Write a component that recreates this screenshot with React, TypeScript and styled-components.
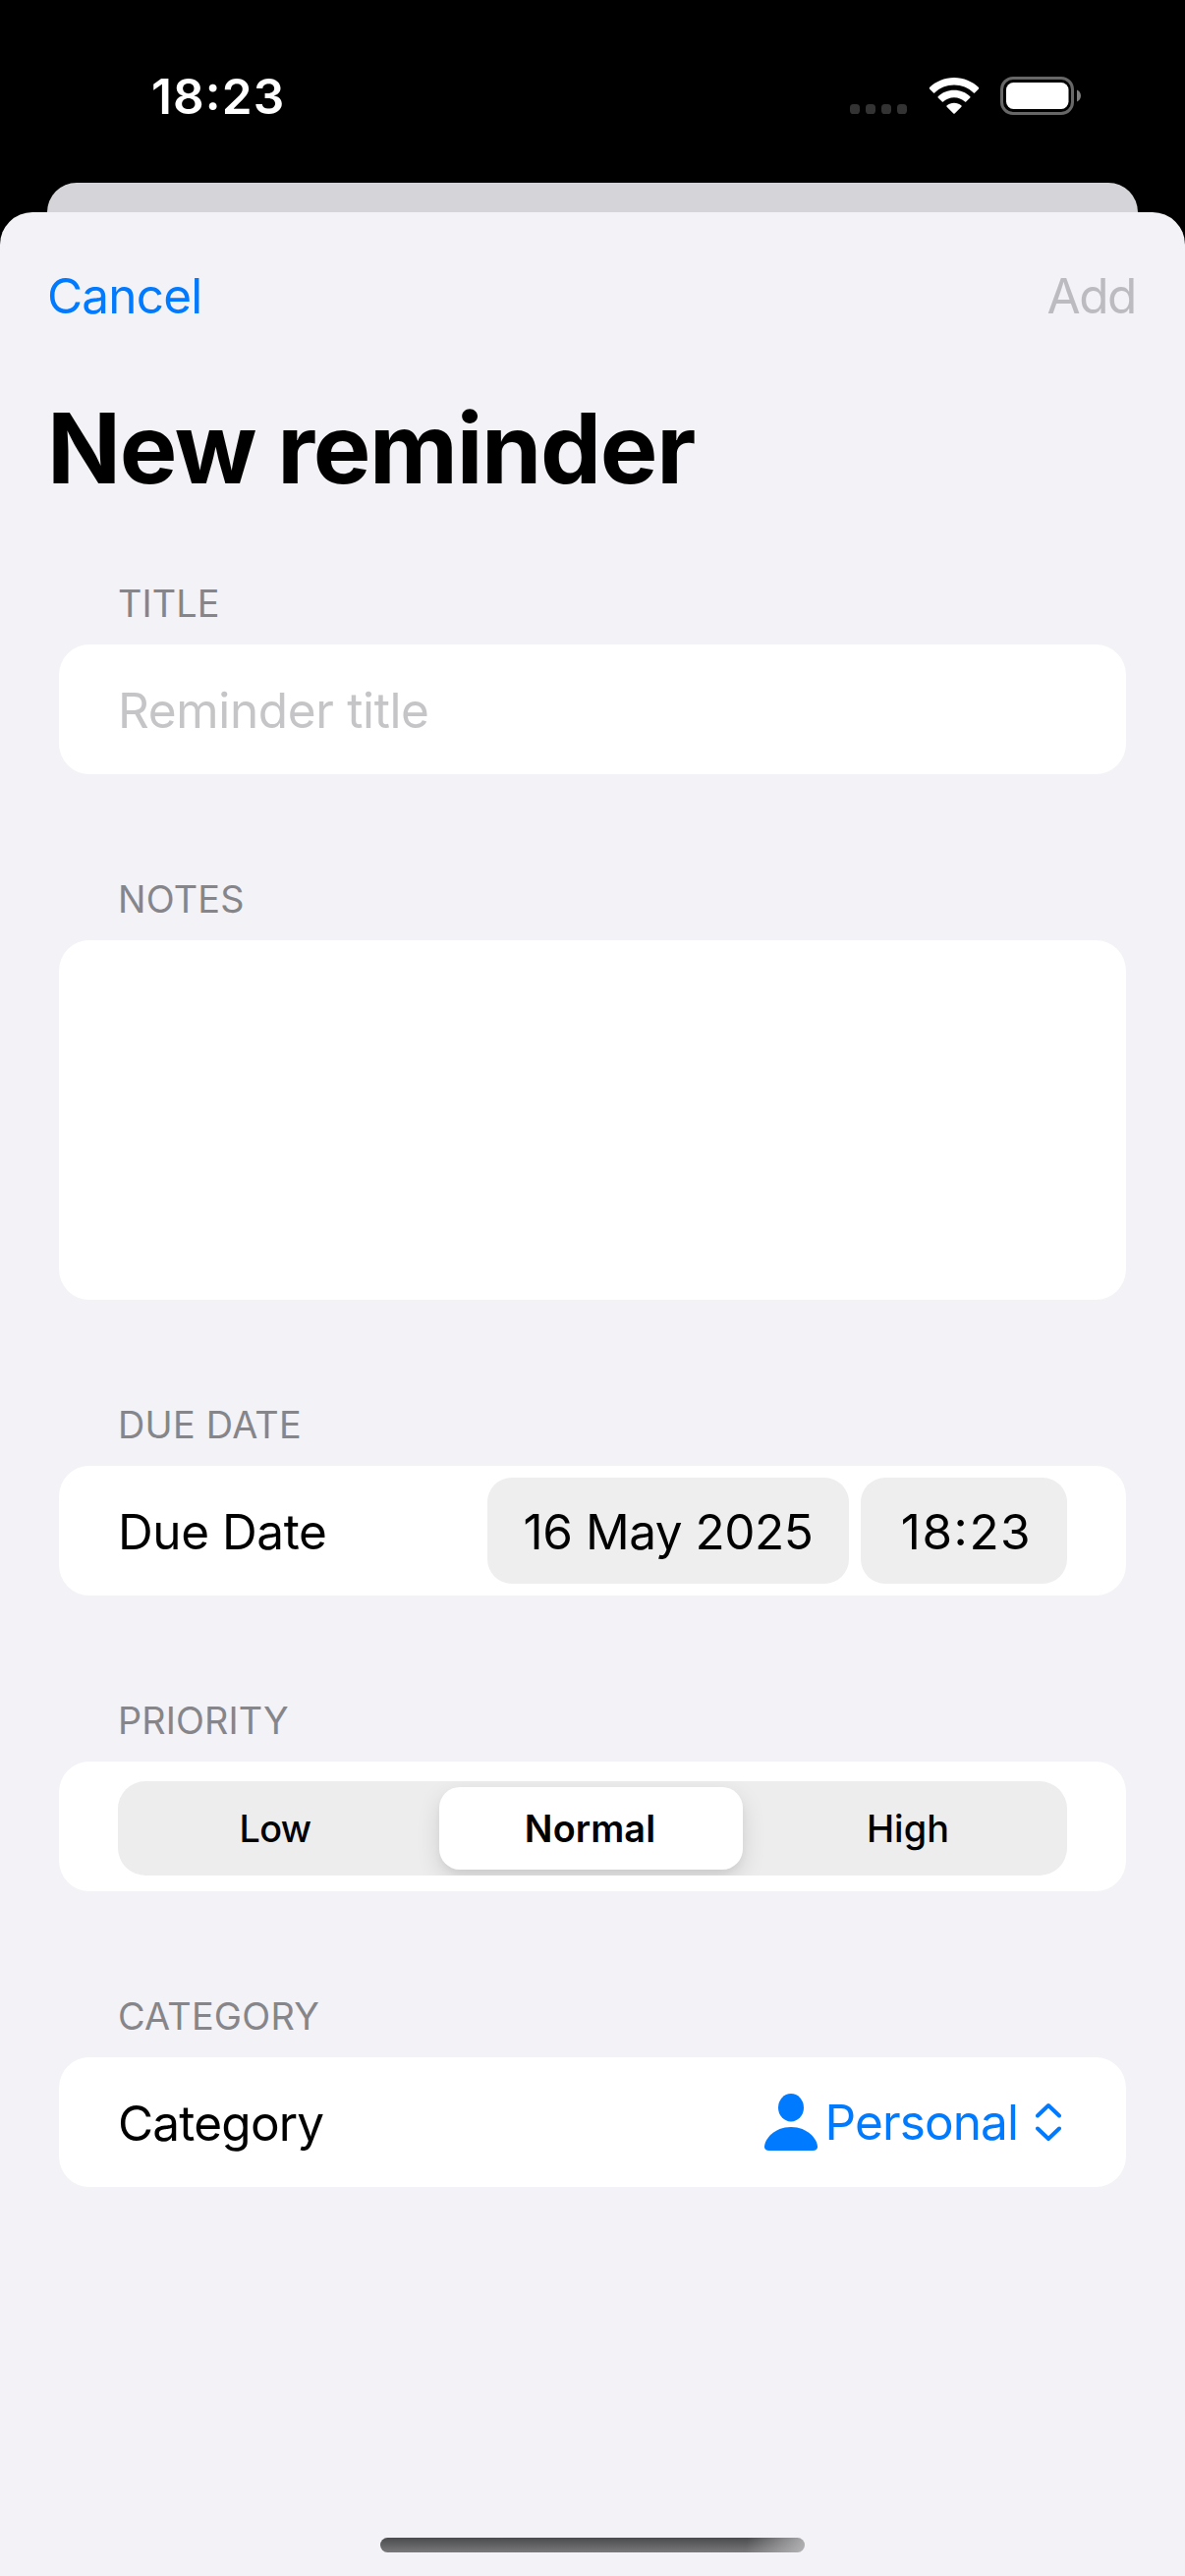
import React from "react";
import styled, { createGlobalStyle } from "styled-components";

const GlobalStyle = createGlobalStyle`
  *, *::before, *::after { box-sizing: border-box; }
  html, body { margin: 0; padding: 0; background: #000; }
  button { border: 0; margin: 0; background: none; font: inherit; color: inherit; }
`;

const Screen = styled.div`
  width: 1206px;
  height: 2622px;
  display: flex;
  flex-direction: column;
  overflow: hidden;
  background: #000;
  color: #000;
  font-family: Inter, "Liberation Sans", sans-serif;
  font-size: 49.5px;
  line-height: 60px;
  white-space: nowrap;
`;

const StatusBar = styled.header`
  height: 186px;
  flex: none;
  display: flex;
  justify-content: space-between;
  align-items: flex-start;
  padding: 68px 106px 0 154px;
`;

const Clock = styled.time`
  color: #fff;
  font-weight: 600;
  letter-spacing: 1.1px;
`;

const Colon = styled.span`
  vertical-align: 4px;
  line-height: 0;
`;

const StatusIcons = styled.div`
  display: flex;
  align-items: flex-start;
  padding-top: 10px;
`;

const BackSheet = styled.div`
  height: 30px;
  flex: none;
  margin: 0 48px;
  border-radius: 32px 32px 0 0;
  background: #d5d4d9;
`;

const Sheet = styled.main`
  flex: 1;
  display: flex;
  flex-direction: column;
  border-radius: 33px 33px 0 0;
  background: #f2f2f7;
`;

const NavBar = styled.nav`
  display: flex;
  justify-content: space-between;
  padding: 55px 50px 0 48px;
`;

const NavButton = styled.button<{ $disabled?: boolean; $tracking: number }>`
  padding: 0;
  color: ${(p) => (p.$disabled ? "#bcbbc0" : "#007aff")};
  letter-spacing: ${(p) => p.$tracking}px;
`;

const Heading = styled.h1`
  margin: 66px 48px 74px;
  font-size: 98.5px;
  line-height: 120px;
  font-weight: 700;
  letter-spacing: -1.3px;
`;

const Form = styled.div`
  display: flex;
  flex-direction: column;
  gap: 104px;
  padding: 0 60px;
`;

const Section = styled.section`
  display: flex;
  flex-direction: column;
`;

const SectionHeader = styled.h2<{ $tracking?: number }>`
  margin: 0;
  padding: 0 60px 19px;
  color: #86858a;
  font-size: 37.8px;
  line-height: 46px;
  font-weight: 400;
  letter-spacing: ${(p) => p.$tracking ?? 0}px;
`;

const Card = styled.div<{ $tall?: boolean }>`
  height: ${(p) => (p.$tall ? 366 : 132)}px;
  display: flex;
  align-items: center;
  justify-content: space-between;
  padding: 0 60px;
  border-radius: 31px;
  background: #fff;
`;

const Label = styled.span<{ $tracking: number; $muted?: boolean }>`
  padding-top: 2px;
  color: ${(p) => (p.$muted ? "#c5c5c7" : "#000")};
  letter-spacing: ${(p) => p.$tracking}px;
`;

const Pickers = styled.div`
  display: flex;
  gap: 12px;
`;

const Pill = styled.button<{ $width: number; $tracking: number; $shift?: number }>`
  width: ${(p) => p.$width}px;
  height: 108px;
  padding: 1px 0 0 ${(p) => p.$shift ?? 0}px;
  border-radius: 25px;
  background: #eee;
  letter-spacing: ${(p) => p.$tracking}px;
`;

const Segmented = styled.div`
  flex: 1;
  height: 96px;
  margin-top: 4px;
  display: grid;
  grid-template-columns: repeat(3, 1fr);
  padding: 6px 0;
  border-radius: 28px;
  background: #ededed;
  overflow: hidden;
  font-size: 37.8px;
`;

const Segment = styled.button<{ $selected?: boolean; $tracking: number }>`
  margin: ${(p) => (p.$selected ? "0 8px 0 5px" : "0")};
  padding: 0 2px 1px 0;
  border-radius: 21px;
  background: ${(p) => (p.$selected ? "#fff" : "transparent")};
  box-shadow: ${(p) => (p.$selected ? "0 9px 24px rgba(0, 0, 0, 0.12), 0 5px 6px rgba(0, 0, 0, 0.04)" : "none")};
  font-weight: ${(p) => (p.$selected ? 580 : 470)};
  letter-spacing: ${(p) => p.$tracking}px;
`;

const Menu = styled.button`
  display: flex;
  align-items: center;
  padding: 0 6px 0 0;
  color: #007aff;
  letter-spacing: -0.9px;
`;

const MenuText = styled.span`
  margin: 0 18px 0 8px;
`;

const HomeIndicator = styled.div`
  width: 432px;
  height: 15px;
  margin: auto auto 24px;
  border-radius: 8px;
  background:
    linear-gradient(100deg, transparent 86%, rgba(190, 190, 192, 0.85) 100%),
    linear-gradient(#4a4b4c, #79797c);
`;

function Time() {
  return <>18<Colon>:</Colon>23</>;
}

function CellDots() {
  return (
    <svg width="58" height="38" viewBox="0 0 58 38" fill="#333">
      {[0, 16, 32, 48].map((x) => (
        <rect key={x} x={x} y="28" width="10" height="10" rx="3.6" />
      ))}
    </svg>
  );
}

const WifiIcon = styled.svg`
  margin-left: 22px;
`;

function Wifi() {
  return (
    <WifiIcon width="52" height="39" viewBox="0 0 52 39" fill="#fff">
      <path d="M26 1C35.800 1 44.600 4.800 51 11.100Q51.500 11.800 51 12.400L47 16.400Q46.400 16.900 45.800 16.400C40.600 11.500 33.700 8.500 26 8.500S11.400 11.500 6.200 16.400Q5.600 16.900 5 16.400L1 12.400Q.5 11.800 1 11.100C7.400 4.800 16.200 1 26 1Z" />
      <path d="M26 13.800C32.300 13.800 38 16.200 42.300 20.200Q42.900 20.900 42.300 21.500L38.200 25.500Q37.600 26.100 37 25.600C34.100 22.900 30.200 21.300 26 21.300S17.900 22.900 15 25.600Q14.400 26.100 13.800 25.500L9.700 21.500Q9.100 20.900 9.700 20.200C14 16.200 19.700 13.800 26 13.800Z" />
      <path d="M26 26.700C28.800 26.700 31.300 27.700 33.300 29.300Q34 30 33.400 30.700L26.700 37.500Q26 38.200 25.300 37.500L18.600 30.700Q18 30 18.700 29.300C20.700 27.700 23.200 26.700 26 26.700Z" />
    </WifiIcon>
  );
}

const BatteryIcon = styled.svg`
  margin-left: 21px;
`;

function Battery() {
  return (
    <BatteryIcon width="82" height="39" viewBox="0 0 82 39">
      <rect x="1.500" y="1.500" width="72" height="36" rx="11.500" fill="none" stroke="#676767" strokeWidth="3" />
      <rect x="6" y="6" width="63.500" height="27" rx="7.500" fill="#fff" />
      <path d="M78 13.500C80.300 14.500 82 16.700 82 19.500S80.300 24.500 78 25.500Z" fill="#7d7d7d" />
    </BatteryIcon>
  );
}

function Person() {
  return (
    <svg width="54" height="60" viewBox="0 0 54 60" fill="currentColor">
      <ellipse cx="27" cy="15.300" rx="13" ry="14.200" />
      <path d="M4.800 59C1.700 59 0 57.600 0 55.200C0 47.600 9.800 35 27 35S54 47.600 54 55.200C54 57.600 52.300 59 49.200 59Z" />
    </svg>
  );
}

function UpDown() {
  return (
    <svg width="26" height="40" viewBox="0 0 26 40" fill="none" stroke="currentColor" strokeWidth="4" strokeLinecap="round" strokeLinejoin="round">
      <path d="M2 13.500L13 3L24 13.500M2 26.500L13 37L24 26.500" />
    </svg>
  );
}

export default function App() {
  return (
    <Screen>
      <GlobalStyle />
      <StatusBar>
        <Clock><Time /></Clock>
        <StatusIcons>
          <CellDots />
          <Wifi />
          <Battery />
        </StatusIcons>
      </StatusBar>
      <BackSheet />
      <Sheet>
        <NavBar>
          <NavButton $tracking={-0.8}>Cancel</NavButton>
          <NavButton $tracking={-1.4} $disabled>Add</NavButton>
        </NavBar>
        <Heading>New reminder</Heading>
        <Form>
          <Section>
            <SectionHeader $tracking={0.1}>TITLE</SectionHeader>
            <Card><Label $tracking={-0.35} $muted>Reminder title</Label></Card>
          </Section>
          <Section>
            <SectionHeader $tracking={0.2}>NOTES</SectionHeader>
            <Card $tall />
          </Section>
          <Section>
            <SectionHeader $tracking={0.28}>DUE DATE</SectionHeader>
            <Card>
              <Label $tracking={-0.43}>Due Date</Label>
              <Pickers>
                <Pill $width={368} $tracking={-0.47}>16 May 2025</Pill>
                <Pill $width={210} $tracking={1.5} $shift={5}><Time /></Pill>
              </Pickers>
            </Card>
          </Section>
          <Section>
            <SectionHeader $tracking={0.12}>PRIORITY</SectionHeader>
            <Card>
              <Segmented>
                <Segment $tracking={-0.7}>Low</Segment>
                <Segment $tracking={0.1} $selected>Normal</Segment>
                <Segment $tracking={0.1}>High</Segment>
              </Segmented>
            </Card>
          </Section>
          <Section>
            <SectionHeader $tracking={0.25}>CATEGORY</SectionHeader>
            <Card>
              <Label $tracking={-0.8}>Category</Label>
              <Menu>
                <Person />
                <MenuText>Personal</MenuText>
                <UpDown />
              </Menu>
            </Card>
          </Section>
        </Form>
        <HomeIndicator />
      </Sheet>
    </Screen>
  );
}
